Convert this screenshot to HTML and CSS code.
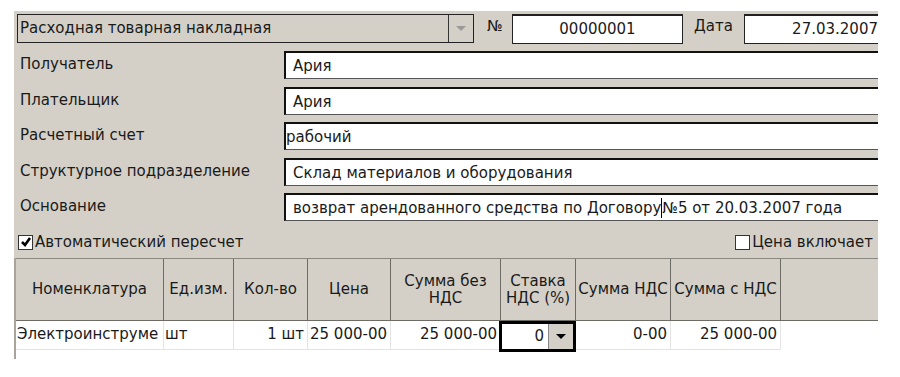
FILE: index.html
```html
<!DOCTYPE html>
<html>
<head>
  <link rel="stylesheet" href="styles.css">
</head>
<body>
  <div class="form">
    <div class="top-row">
      <div class="combo">
        <span class="combo-text">Расходная товарная накладная</span>
        <span class="combo-btn"><span class="arrow arrow-grey"></span></span>
      </div>
      <span class="top-label num-label">№</span>
      <div class="field field-num">00000001</div>
      <span class="top-label date-label">Дата</span>
      <div class="field field-date">27.03.2007</div>
    </div>

    <div class="fields">
      <div class="row">
        <span class="label">Получатель</span>
        <div class="input">Ария</div>
      </div>
      <div class="row">
        <span class="label">Плательщик</span>
        <div class="input">Ария</div>
      </div>
      <div class="row">
        <span class="label">Расчетный счет</span>
        <div class="input tight">рабочий</div>
      </div>
      <div class="row">
        <span class="label">Структурное подразделение</span>
        <div class="input">Склад материалов и оборудования</div>
      </div>
      <div class="row">
        <span class="label">Основание</span>
        <div class="input">возврат арендованного средства по Договору<span class="caret"></span>№5 от 20.03.2007 года</div>
      </div>
    </div>

    <div class="check-row">
      <label class="check">
        <span class="box">
          <svg width="12" height="12" viewBox="0 0 12 12"><path d="M2 6 L5 9 L10 2" fill="none" stroke="#000" stroke-width="2.6"/></svg>
        </span>Автоматический пересчет
      </label>
      <label class="check">
        <span class="box"></span>Цена включает
      </label>
    </div>

    <div class="grid">
      <div class="grid-head">
        <div class="hc c-nom">Номенклатура</div>
        <div class="hc c-ed">Ед.изм.</div>
        <div class="hc c-kol">Кол-во</div>
        <div class="hc c-price">Цена</div>
        <div class="hc c-sum">Сумма без<br>НДС</div>
        <div class="hc c-rate">Ставка<br>НДС (%)</div>
        <div class="hc c-nds">Сумма НДС</div>
        <div class="hc c-total">Сумма с НДС</div>
        <div class="hc c-rest"></div>
      </div>
      <div class="grid-body">
        <div class="grid-row">
          <div class="dc c-nom left">Электроинструме</div>
          <div class="dc c-ed left">шт</div>
          <div class="dc c-kol">1 шт</div>
          <div class="dc c-price">25 000-00</div>
          <div class="dc c-sum">25 000-00</div>
          <div class="dc c-rate active">
            <span class="rate-val">0</span>
            <span class="cell-btn"><span class="arrow"></span></span>
          </div>
          <div class="dc c-nds">0-00</div>
          <div class="dc c-total">25 000-00</div>
        </div>
      </div>
    </div>
  </div>
</body>
</html>
```

FILE: styles.css
```css
body {
  margin: 0;
  background: #fff;
  font-family: "DejaVu Sans", Tahoma, sans-serif;
  font-size: 15px;
  color: #1a1a1a;
}

.form {
  margin: 11px 0 0 14px;
  width: 864px;
  background: #d4d0c8;
}

.top-row {
  display: flex;
  align-items: center;
  height: 31px;
  padding-top: 2px;
  padding-left: 3px;
}

.combo {
  display: flex;
  width: 455px;
  height: 27px;
  border: 1px solid #222;
  box-sizing: content-box;
}

.combo-text {
  flex: 1;
  padding-left: 2px;
  line-height: 27px;
}

.combo-btn {
  width: 24px;
  border-left: 1px solid #333;
  display: flex;
  align-items: center;
  justify-content: center;
}

.arrow {
  width: 0;
  height: 0;
  border-left: 5px solid transparent;
  border-right: 5px solid transparent;
  border-top: 5px solid #000;
}

.arrow-grey {
  border-top-color: #9a9a9a;
}

.top-label {
  line-height: 27px;
  margin-top: -4px;
}

.num-label {
  margin-left: 13px;
  width: 25px;
}

.date-label {
  margin-left: 11px;
  width: 50px;
}

.field {
  height: 27px;
  line-height: 27px;
  background: #fff;
  border: 1px solid #222;
  border-top-width: 2px;
  box-sizing: content-box;
}

.field-num {
  width: 169px;
  text-align: center;
}

.field-date {
  flex: 1;
  border-right: none;
  text-align: right;
}

.fields {
  display: flex;
  flex-direction: column;
  gap: 7.5px;
  margin-top: 7px;
}

.row {
  display: flex;
  height: 28px;
}

.label {
  width: 264px;
  padding-left: 6px;
  line-height: 26px;
}

.input {
  flex: 1;
  background: #fff;
  border-top: 2px solid #111;
  border-left: 2px solid #111;
  border-bottom: 1px solid #555;
  padding-left: 7px;
  line-height: 26px;
  white-space: nowrap;
  overflow: hidden;
}

.input.tight {
  padding-left: 0;
}

.caret {
  display: inline-block;
  width: 1px;
  height: 20px;
  background: #000;
  vertical-align: -5px;
}

.check-row {
  display: flex;
  justify-content: space-between;
  align-items: center;
  height: 24px;
  margin-top: 9px;
  padding: 0 5px 0 4px;
}

.check {
  display: flex;
  align-items: center;
}

.box {
  width: 13px;
  height: 13px;
  border: 1px solid #333;
  background: #fff;
  margin-right: 2px;
  display: flex;
  align-items: center;
  justify-content: center;
}

.grid {
  margin-top: 4px;
  border-left: 2px solid #a8a49c;
  padding-top: 7px;
  background: #fff;
  padding-bottom: 9px;
}

.grid-head {
  display: flex;
  height: 61px;
  background: #d4d0c8;
  border-top: 1px solid #8a8680;
  border-bottom: 1px solid #6e6a64;
  margin-top: -7px;
  box-shadow: 0 -7px 0 #d4d0c8;
}

.hc {
  display: flex;
  align-items: center;
  justify-content: center;
  text-align: center;
  border-right: 1px solid #6e6a64;
  line-height: 17px;
}

.c-nom { width: 147px; }
.c-ed { width: 69px; }
.c-kol { width: 73px; }
.c-price { width: 82px; }
.c-sum { width: 109px; }
.c-rate { width: 74px; }
.c-nds { width: 94px; }
.c-total { width: 109px; }

.hc.c-rest {
  flex: 1;
  border-right: none;
}

.grid-row {
  display: flex;
  height: 29px;
}

.dc {
  line-height: 27px;
  text-align: right;
  padding-right: 3px;
  border-right: 1px solid #e4e4e4;
  border-bottom: 1px solid #e4e4e4;
  white-space: nowrap;
  overflow: hidden;
  box-sizing: border-box;
}

.dc.c-nom { width: 148px; }
.dc.c-ed { width: 70px; }
.dc.c-kol { width: 74px; }
.dc.c-price { width: 83px; }
.dc.c-sum { width: 110px; }
.dc.c-rate { width: 75px; }
.dc.c-nds { width: 95px; }
.dc.c-total { width: 110px; }

.dc.left {
  text-align: left;
  padding-left: 1px;
  padding-right: 0;
}

.dc.active {
  display: flex;
  border: 3px solid #000;
  padding: 0;
  height: 31px;
  margin-left: -2px;
  width: 77px;
  overflow: visible;
}

.rate-val {
  flex: 1;
  text-align: right;
  padding-right: 4px;
  line-height: 24px;
}

.cell-btn {
  width: 24px;
  background: #d4d0c8;
  border-left: 1px solid #888;
  display: flex;
  align-items: center;
  justify-content: center;
}
```
